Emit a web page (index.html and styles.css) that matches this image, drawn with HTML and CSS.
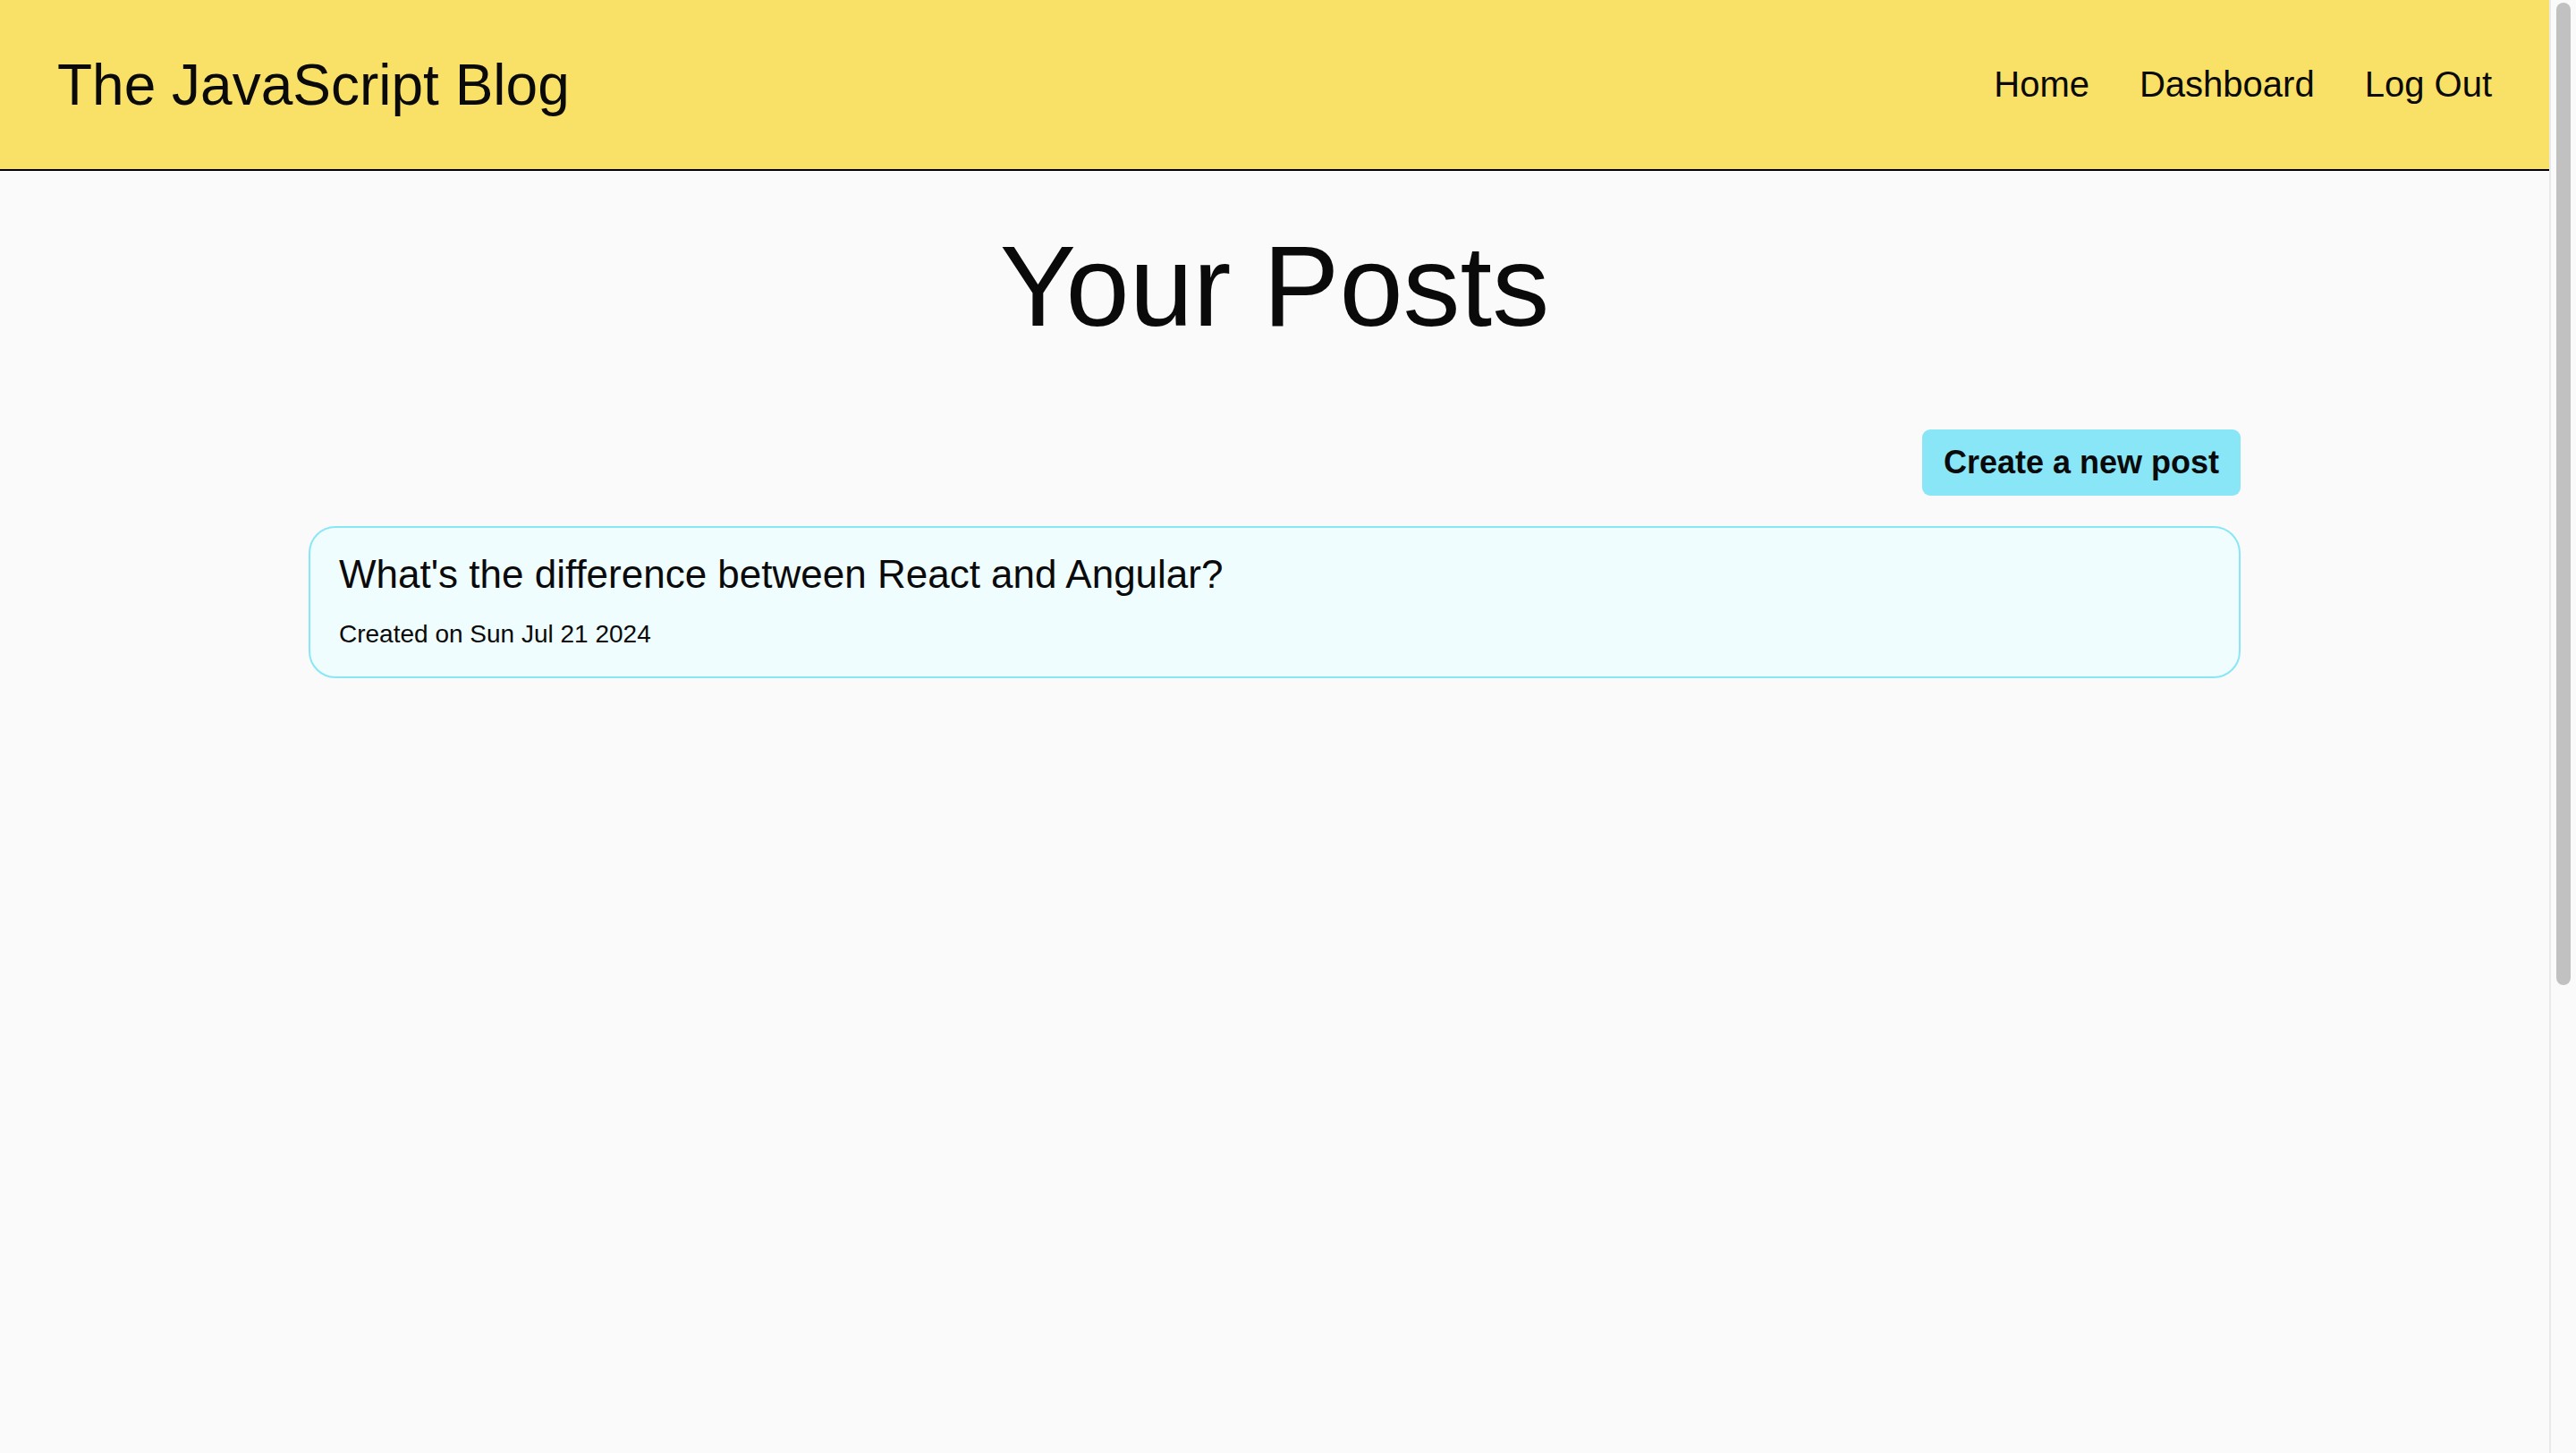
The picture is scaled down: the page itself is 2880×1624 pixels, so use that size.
FILE: index.html
```html
<!DOCTYPE html>
<html lang="en">
<head>
<meta charset="utf-8">
<title>The JavaScript Blog</title>
<link rel="stylesheet" href="styles.css">
</head>
<body>
<div class="page">
  <header class="site-header">
    <a class="brand" href="#">The JavaScript Blog</a>
    <nav class="nav">
      <a href="#">Home</a>
      <a href="#">Dashboard</a>
      <a href="#">Log Out</a>
    </nav>
  </header>
  <main class="main">
    <h1 class="page-title">Your Posts</h1>
    <section class="posts">
      <div class="actions">
        <a class="btn-new" href="#">Create a new post</a>
      </div>
      <article class="post-card">
        <h2 class="post-title">What's the difference between React and Angular?</h2>
        <p class="post-meta">Created on Sun Jul 21 2024</p>
      </article>
    </section>
  </main>
</div>
<div class="scrollbar" aria-hidden="true">
  <div class="scrollbar-thumb"></div>
</div>
</body>
</html>
```
FILE: styles.css
```css
html {
  overflow: hidden;
}
body {
  margin: 0;
  min-height: 100vh;
  display: grid;
  grid-template-columns: 1fr 30px;
  background: #fafafa;
  color: #0a0a0a;
  font-family: "Liberation Sans", Arial, Helvetica, sans-serif;
}
a {
  color: inherit;
  text-decoration: none;
}
.page {
  min-width: 0;
}
.scrollbar {
  box-sizing: border-box;
  border-left: 2px solid #e9e9e9;
  background: #fafafa;
  padding: 3px 6px 0 6px;
}
.scrollbar-thumb {
  height: 1098px;
  border-radius: 8px;
  background: #c1c1c1;
}
.site-header {
  height: 189px;
  box-sizing: content-box;
  background: #f9e066;
  border-bottom: 2px solid #000;
  display: flex;
  align-items: center;
  justify-content: space-between;
  padding: 0 64px;
}
.brand {
  font-size: 64px;
  line-height: 1;
}
.nav {
  display: flex;
  gap: 56px;
  font-size: 40px;
}
.main {
  display: flex;
  flex-direction: column;
  align-items: center;
}
.page-title {
  margin: 55px 0 0;
  font-size: 128px;
  font-weight: 400;
  line-height: 1.15;
}
.posts {
  width: 100%;
  max-width: 2160px;
  margin-top: 87px;
  display: flex;
  flex-direction: column;
  gap: 34px;
}
.actions {
  display: flex;
  justify-content: flex-end;
}
.btn-new {
  background: #89e6f7;
  font-size: 36px;
  font-weight: 700;
  padding: 16px 24px;
  border-radius: 9px;
}
.post-card {
  background: #effdfe;
  border: 2px solid #89e6f7;
  border-radius: 30px;
  padding: 26px 32px 30px;
}
.post-title {
  margin: 0;
  font-size: 44px;
  font-weight: 400;
  line-height: 1.2;
}
.post-meta {
  margin: 23px 0 0;
  font-size: 28px;
  line-height: 1.2;
}
```
